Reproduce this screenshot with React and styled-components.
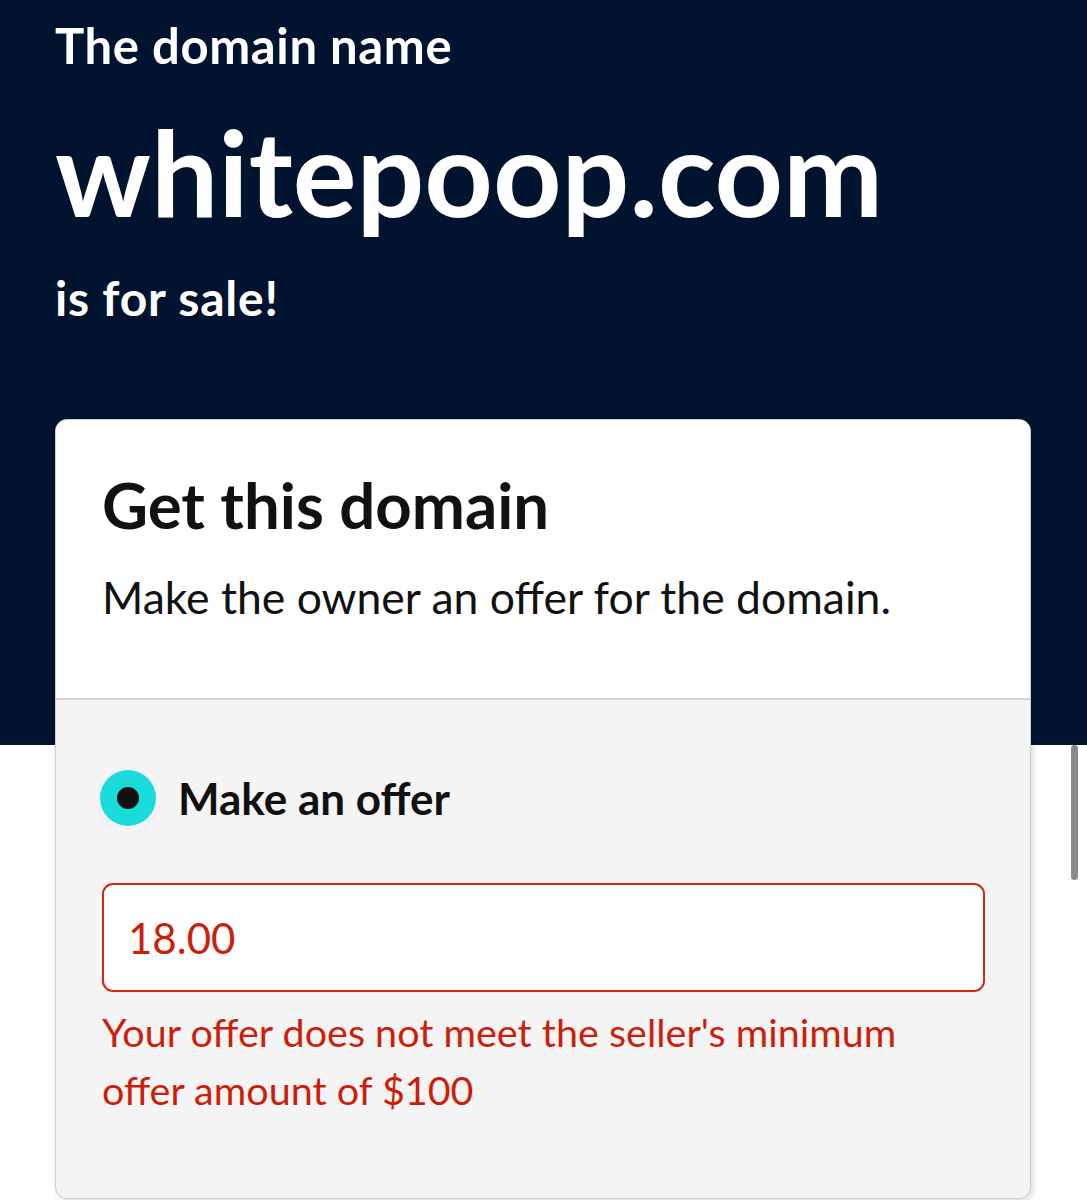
import React from 'react'
import styled, { createGlobalStyle } from 'styled-components'

const Global = createGlobalStyle`
  html, body {
    margin: 0;
    padding: 0;
    background: #ffffff;
    font-family: Lato, "Open Sans", sans-serif;
  }
`

function App() {
  return (
    <Page>
      <Global />
      <Hero>
        <Eyebrow>The domain name</Eyebrow>
        <Domain>whitepoop.com</Domain>
        <Sale>is for sale!</Sale>
      </Hero>
      <CardArea>
        <Card>
          <CardTop>
            <CardTitle>Get this domain</CardTitle>
            <CardText>Make the owner an offer for the domain.</CardText>
          </CardTop>
          <CardBody>
            <Option>
              <Radio><Dot /></Radio>
              <OptionLabel>Make an offer</OptionLabel>
            </Option>
            <OfferInput defaultValue="18.00" error />
            <ErrorText>
              Your offer does not meet the seller's minimum offer amount of $100
            </ErrorText>
          </CardBody>
        </Card>
      </CardArea>
      <ScrollThumb />
    </Page>
  )
}

export default App

const Page = styled.div`
  position: relative;
  min-height: 1200px;
  overflow: hidden;
`

const Hero = styled.div`
  background: #00132f;
  color: #ffffff;
  padding: 18px 55px 0 55px;
  height: 727px;
  display: flex;
  flex-direction: column;
`

const Eyebrow = styled.div`
  font-size: 49px;
  font-weight: 700;
  line-height: 54px;
  letter-spacing: 0.6px;
`

const Domain = styled.div`
  font-size: 119.5px;
  font-weight: 700;
  line-height: 130px;
  margin-top: 34px;
`

const Sale = styled.div`
  font-size: 48px;
  font-weight: 700;
  line-height: 52px;
  margin-top: 36px;
  letter-spacing: 0.8px;
`

const CardArea = styled.div`
  margin-top: -326px;
  padding: 0 56px 0 55px;
`

const Card = styled.div`
  border: 1px solid #c9d2dc;
  border-radius: 12px;
  overflow: hidden;
  box-shadow: 2px 2px 6px rgba(0, 0, 0, 0.15);
  height: 778px;
  background: #f4f4f4;
`

const CardTop = styled.div`
  background: #ffffff;
  padding: 48px 46px 0 46px;
  height: 230px;
  border-bottom: 2px solid #d6d6d6;
`

const CardTitle = styled.div`
  font-size: 63.5px;
  font-weight: 700;
  color: #111111;
  line-height: 74px;
`

const CardText = styled.div`
  font-size: 44.5px;
  color: #111111;
  line-height: 50px;
  margin-top: 30px;
`

const CardBody = styled.div`
  padding: 70px 45px 0 46px;
`

const Option = styled.div`
  display: flex;
  align-items: center;
  gap: 22px;
  margin-left: -2px;
`

const Radio = styled.div`
  width: 56px;
  height: 56px;
  border-radius: 50%;
  background: #1bdbdb;
  display: flex;
  align-items: center;
  justify-content: center;
`

const Dot = styled.div`
  width: 22px;
  height: 22px;
  border-radius: 50%;
  background: #111111;
`

const OptionLabel = styled.div`
  font-size: 44px;
  font-weight: 700;
  color: #111111;
`

const OfferInput = styled.input`
  display: block;
  box-sizing: border-box;
  width: 100%;
  height: 109px;
  margin-top: 57px;
  border: 2px solid ${p => (p.error ? '#d02a14' : '#767676')};
  border-radius: 11px;
  background: #ffffff;
  padding: 0 24px;
  font-family: Lato, sans-serif;
  font-size: 42px;
  color: ${p => (p.error ? '#cc1f0b' : '#111111')};
  outline: none;
`

const ErrorText = styled.div`
  margin-top: 11px;
  font-size: 39.5px;
  line-height: 58px;
  color: #cc1f0b;
  max-width: 820px;
`

const ScrollThumb = styled.div`
  position: absolute;
  left: 1071px;
  top: 745px;
  width: 7px;
  height: 135px;
  border-radius: 4px;
  background: #8a8a8a;
`
